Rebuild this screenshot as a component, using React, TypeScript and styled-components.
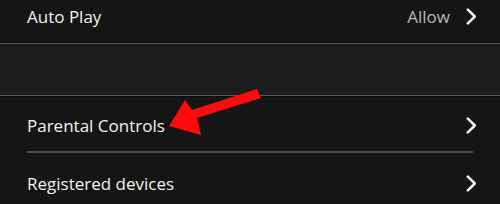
import React from "react";
import styled, { createGlobalStyle } from "styled-components";

const GlobalStyle = createGlobalStyle`
  html, body {
    margin: 0;
    padding: 0;
    background: #151515;
  }
  body {
    font-family: "Open Sans", "Noto Sans", sans-serif;
    -webkit-font-smoothing: antialiased;
  }
`;

interface Setting {
  label: string;
  value?: string;
}

const topSettings: Setting[] = [{ label: "Auto Play", value: "Allow" }];
const bottomSettings: Setting[] = [{ label: "Parental Controls" }, { label: "Registered devices" }];

const Chevron: React.FC = () => (
  <ChevronSvg viewBox="0 0 11 17" aria-hidden>
    <polyline points="1.8,1.6 8.8,8.5 1.8,15.4" />
  </ChevronSvg>
);

export default function App() {
  return (
    <>
      <GlobalStyle />
      <Screen>
        <Group>
          {topSettings.map((s) => (
            <Row key={s.label} $height={42} $shift={-10}>
              <Label>{s.label}</Label>
              <Trail>
                {s.value && <Value>{s.value}</Value>}
                <Chevron />
              </Trail>
            </Row>
          ))}
        </Group>
        <Spacer />
        <Group>
          {bottomSettings.map((s, i) => (
            <Row key={s.label} $height={i === 0 ? 56 : 60} $divider={i < bottomSettings.length - 1}>
              <Label>{s.label}</Label>
              <Trail>
                {s.value && <Value>{s.value}</Value>}
                <Chevron />
              </Trail>
            </Row>
          ))}
        </Group>
        <Annotation viewBox="0 0 500 204" aria-hidden>
          <polygon points="257,89 261,98 197,118 201,135 169,126 185,100 192,110" fill="#ff0a0a" />
        </Annotation>
      </Screen>
    </>
  );
}

const Screen = styled.div`
  position: relative;
  width: 500px;
  height: 204px;
  overflow: hidden;
  background: #151515;
`;

const Group = styled.div`
  display: flex;
  flex-direction: column;
`;

const Spacer = styled.div`
  height: 53px;
  background: #1c1c1c;
  border-top: 1px solid #0b0b0b;
  border-bottom: 1px solid #0b0b0b;
  box-shadow: inset 0 1px 0 #555, inset 0 -1px 0 #555;
`;

const Row = styled.div<{ $height: number; $shift?: number; $divider?: boolean }>`
  position: relative;
  display: flex;
  align-items: center;
  justify-content: space-between;
  height: ${(p) => p.$height}px;
  padding: 0 23px 0 27px;
  box-sizing: border-box;
  padding-bottom: ${(p) => (p.$shift ? -p.$shift : 0)}px;
  ${(p) =>
    p.$divider &&
    `
    &::after {
      content: "";
      position: absolute;
      left: 27px;
      right: 27px;
      bottom: 0;
      height: 2px;
      background: #4a4a4a;
    }
  `}
`;

const Label = styled.span`
  color: #f2f2f2;
  font-size: 17px;
`;

const Trail = styled.div`
  display: flex;
  align-items: center;
  gap: 16px;
`;

const Value = styled.span`
  color: #b8b8b8;
  font-size: 17px;
`;

const ChevronSvg = styled.svg`
  width: 11px;
  height: 17px;
  fill: none;
  stroke: #f4f4f4;
  stroke-width: 2.5;
  stroke-linecap: round;
  stroke-linejoin: round;
`;

const Annotation = styled.svg`
  position: absolute;
  inset: 0;
  width: 500px;
  height: 204px;
  pointer-events: none;
`;
